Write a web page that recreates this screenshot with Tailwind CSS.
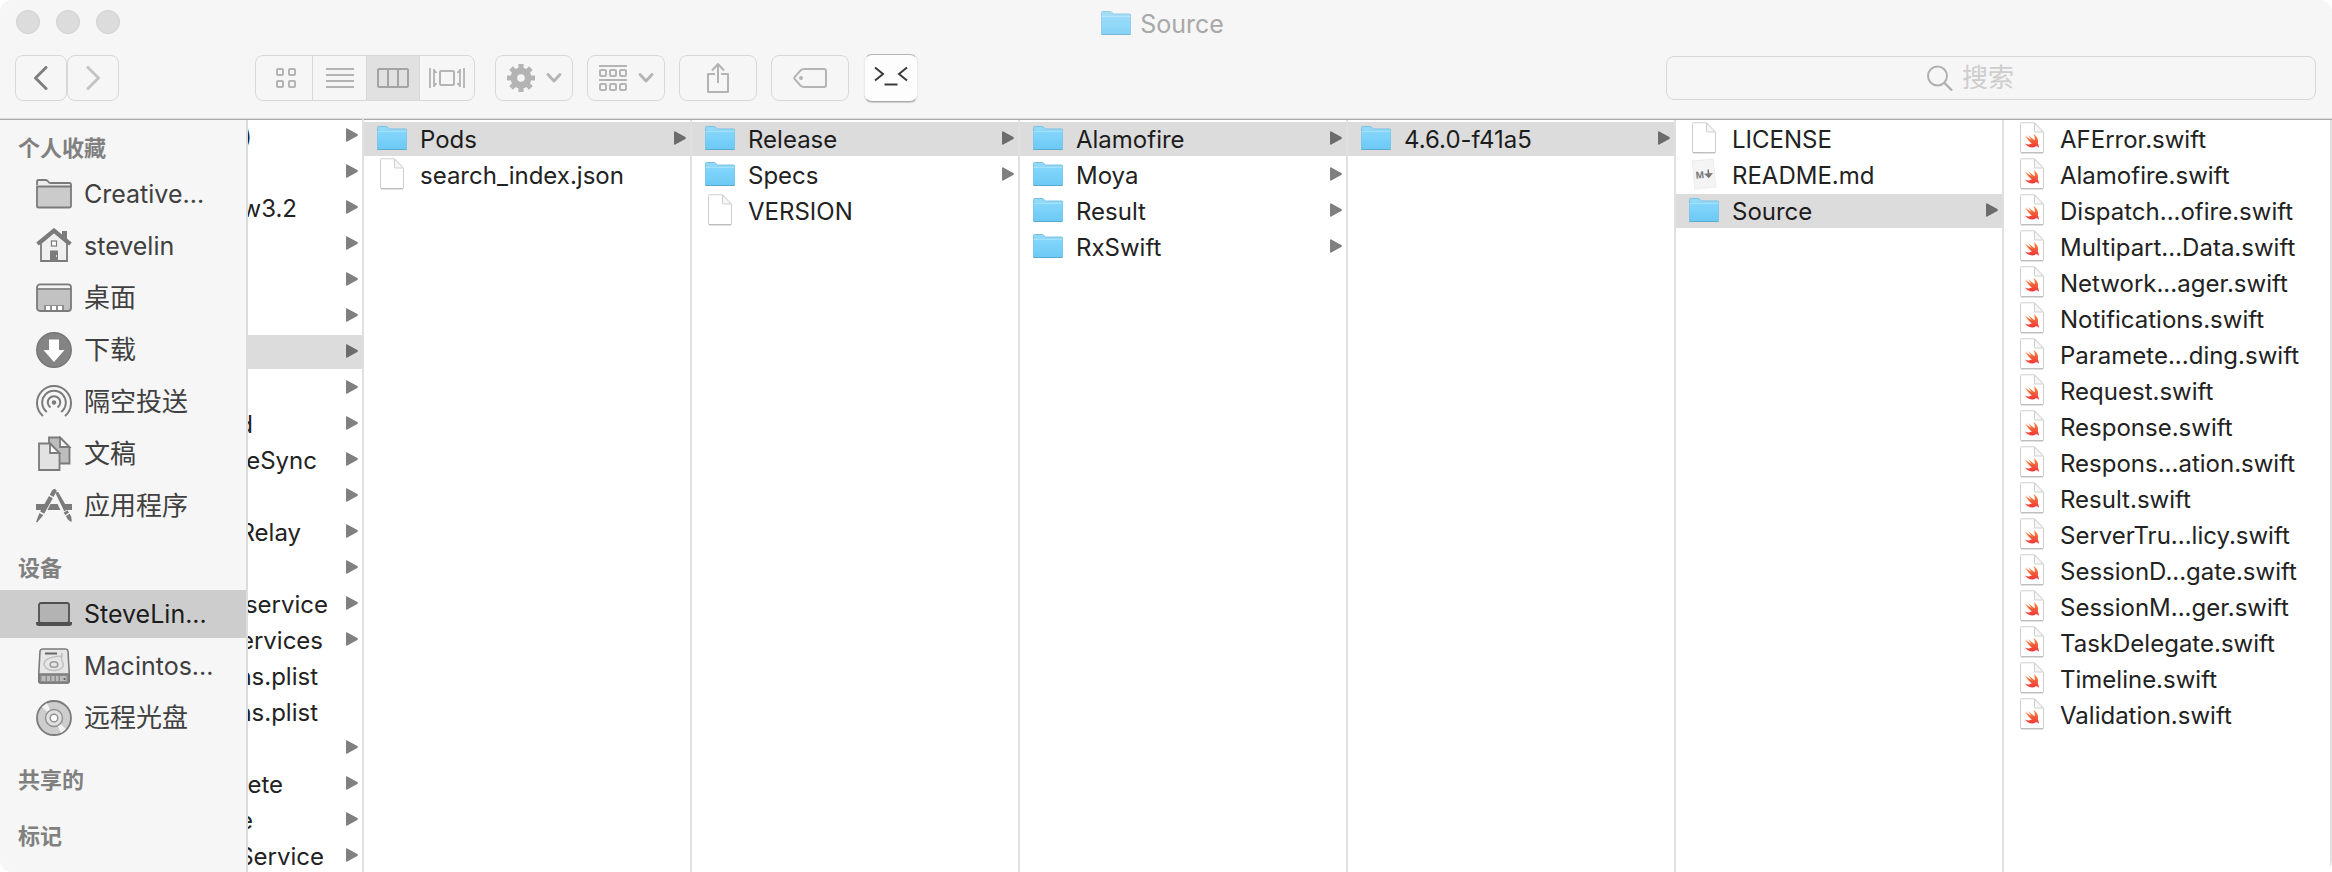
<!DOCTYPE html>
<html lang="zh-CN">
<head>
<meta charset="utf-8">
<title>Source</title>
<script src="https://cdn.jsdelivr.net/npm/@tailwindcss/browser@4"></script>
</head>
<body class="bg-white">
<svg class="absolute size-0" aria-hidden="true">
  <defs>
    <linearGradient id="blue" x1="0" y1="0" x2="0" y2="1"><stop offset="0" stop-color="#84d6fb"/><stop offset="1" stop-color="#6bc9f5"/></linearGradient>
    <linearGradient id="flame" x1="0" y1="0" x2="0" y2="1"><stop offset="0" stop-color="#f88a36"/><stop offset="1" stop-color="#f2333c"/></linearGradient>
    <symbol id="i-folder" viewBox="0 0 32 32">
      <path d="M1.5 27V5.5q0-1 1-1h7.500q.8 0 1.400.6l1.600 1.400q.5.500 1.300.500h15.200q1 0 1 1V27z" fill="#92d8f8" stroke="#7cc0e0"/>
      <path d="M1.500 9.500h29V27q0 .8-.8.8H2.300q-.8 0-.8-.8z" fill="url(#blue)"/>
      <path d="M1.500 9.500h29" stroke="#a4e1fc"/>
      <path d="M1.500 27.500h29" stroke="#5ba9cf"/>
    </symbol>
    <symbol id="i-doc" viewBox="0 0 32 32">
      <path d="M5.200.8h13.300l9 9.500V30q0 .7-.7.7H5.200q-.7 0-.7-.7V1.500q0-.7.7-.7z" fill="#fff" stroke="#cfcfcf"/>
      <path d="M18.500 1v8.200q0 .8.800.8h8z" fill="#f7f7f7" stroke="#d0d0d0"/>
      <path d="M5 30.800h22" stroke="#b4b4b4"/>
    </symbol>
    <symbol id="i-swift" viewBox="0 0 32 32">
      <use href="#i-doc"/>
      <path d="M8.800 21.500C12 26 17.500 26 19.600 24.500c1.400-.6 2.200.1 3.100 1.300.4-1.900-.2-3.400-.9-4.400C23 17 20.500 14 17.500 12c1.400 2.500 1.600 4.400 1.100 6.200C16 16.500 13.500 14.500 12 12.800c1 2 2.300 3.600 3.500 5C13.500 17 11 15.500 9 13.600c1.800 3.200 4.500 6.200 6.800 8-2 1.200-4.700.9-7-.1z" fill="url(#flame)"/>
    </symbol>
    <symbol id="i-md" viewBox="0 0 32 32">
      <g transform="rotate(-5 16 16)">
        <rect x="5.500" y="2" width="21" height="28" fill="#f4f4f4" stroke="#ececec"/>
        <text x="7.500" y="20" font-family="Liberation Sans" font-weight="700" font-size="10" fill="#777">M</text>
        <path d="M20.500 12v6M17.800 16.500l2.700 3 2.700-3z" stroke="#777" stroke-width="1.600" fill="#777"/>
      </g>
    </symbol>
    <symbol id="i-arrow" viewBox="0 0 12 14"><path d="M0 1.200Q0-.2 1.300.5l10 5.600q1.200.9 0 1.800l-10 5.600Q0 14.200 0 12.800z" fill="currentColor"/></symbol>
  </defs>
</svg>

<div class="flex h-screen flex-col overflow-hidden rounded-xl bg-[#f6f6f6] font-['Inter','Noto_Sans_CJK_SC',sans-serif] text-2xl leading-8 text-[#222]">
  <header class="h-[120px] shrink-0 border-b border-[#aaa] shadow-[inset_0_-1px_0_#dedede]">
    <div class="relative flex h-11 items-center gap-4 pl-4">
      <button aria-label="关闭" class="size-6 rounded-full border border-[#cfcfcf] bg-[#dcdcdc]"></button>
      <button aria-label="最小化" class="size-6 rounded-full border border-[#cfcfcf] bg-[#dcdcdc]"></button>
      <button aria-label="缩放" class="size-6 rounded-full border border-[#cfcfcf] bg-[#dcdcdc]"></button>
      <h1 class="absolute inset-x-0 top-[7px] mr-2 flex items-center justify-center gap-2 text-[25px] text-[#a8a8a8]">
        <svg class="mb-[2px] h-8 w-8 opacity-80"><use href="#i-folder"/></svg>Source
      </h1>
    </div>
    <div class="flex items-center pt-[10px] pr-4 pl-[15px]">
      <div class="flex">
        <button aria-label="后退" class="flex h-[46px] w-[52px] items-center justify-center rounded-lg border border-[#d8d8d8]">
          <svg class="h-6 w-4" viewBox="0 0 16 24" fill="none" stroke="#7f7f7f" stroke-width="3" stroke-linecap="round" stroke-linejoin="round"><path d="M13 1.500 2.500 12 13 22.500"/></svg>
        </button>
        <button aria-label="前进" class="flex h-[46px] w-[52px] items-center justify-center rounded-lg border border-[#d8d8d8]">
          <svg class="h-6 w-4" viewBox="0 0 16 24" fill="none" stroke="#c4c4c4" stroke-width="3" stroke-linecap="round" stroke-linejoin="round"><path d="M3 1.500 13.500 12 3 22.500"/></svg>
        </button>
      </div>
      <div class="ml-[136px] flex h-[46px] w-[220px] overflow-hidden rounded-lg border border-[#d8d8d8]">
        <button aria-label="图标" class="flex flex-1 items-center justify-center pl-1">
          <svg class="size-5" viewBox="0 0 20 20" fill="none" stroke="#b4b4b4" stroke-width="2"><rect x="1" y="1" width="6" height="6" rx="1"/><rect x="13" y="1" width="6" height="6" rx="1"/><rect x="1" y="13" width="6" height="6" rx="1"/><rect x="13" y="13" width="6" height="6" rx="1"/></svg>
        </button>
        <button aria-label="列表" class="flex w-[54px] items-center justify-center border-l border-[#d8d8d8]">
          <svg class="h-5 w-7" viewBox="0 0 28 20" stroke="#b4b4b4" stroke-width="2"><path d="M0 1h28M0 7h28M0 13h28M0 19h28"/></svg>
        </button>
        <button aria-label="分栏" class="flex w-[53px] items-center justify-center border-l border-[#d8d8d8] bg-[#e1e1e1]">
          <svg class="h-5 w-8" viewBox="0 0 32 20" fill="none" stroke="#a3a3a3" stroke-width="2"><rect x="1" y="1" width="30" height="18" rx="1"/><path d="M11 1v18M21 1v18"/></svg>
        </button>
        <button aria-label="封面" class="flex w-[55px] items-center justify-center border-l border-[#d8d8d8]">
          <svg class="h-5 w-9" viewBox="0 0 36 20" fill="none" stroke="#b4b4b4" stroke-width="2"><rect x="11" y="3" width="14" height="14" rx="1"/><path d="M1 0v20M35 0v20" stroke-width="1.800"/><path d="M5 1v18M31 1v18" stroke-width="1.800"/><path d="M5 1l3 3v1H5zM5 19l3-3v-1H5zM31 1l-3 3v1h3zM31 19l-3-3v-1h3z" fill="#b4b4b4" stroke="none"/></svg>
        </button>
      </div>
      <div class="ml-5 flex gap-[14px]">
        <button aria-label="操作" class="flex h-[46px] w-[78px] items-center justify-center gap-[11px] rounded-lg border border-[#d8d8d8]">
          <svg class="size-7" viewBox="-14 -14 28 28" fill="#b4b4b4"><path fill-rule="evenodd" d="M0-10.500a10.500 10.500 0 1 0 0 21 10.500 10.500 0 1 0 0-21zM0-3.800a3.800 3.800 0 1 1 0 7.600 3.800 3.800 0 1 1 0-7.600z"/><g id="teeth"><path d="M-2.600-14h5.200v5h-5.200zM-2.600 9h5.200v5h-5.200zM-14-2.600h5v5.200h-5zM9-2.600h5v5.200H9z"/></g><use href="#teeth" transform="rotate(45)"/></svg>
          <svg class="h-[10px] w-4" viewBox="0 0 16 10" fill="none" stroke="#b4b4b4" stroke-width="2.800" stroke-linecap="round" stroke-linejoin="round"><path d="M2 1.500 8 8l6-6.500"/></svg>
        </button>
        <button aria-label="排列" class="flex h-[46px] w-[78px] items-center justify-center gap-[11px] rounded-lg border border-[#d8d8d8]">
          <svg class="h-[26px] w-7" viewBox="0 0 28 26" fill="none" stroke="#b4b4b4" stroke-width="2"><path d="M0 1h28M0 15h28"/><rect x="1" y="5" width="6" height="6" rx="1"/><rect x="11" y="5" width="6" height="6" rx="1"/><rect x="21" y="5" width="6" height="6" rx="1"/><rect x="1" y="19" width="6" height="6" rx="1"/><rect x="11" y="19" width="6" height="6" rx="1"/><rect x="21" y="19" width="6" height="6" rx="1"/></svg>
          <svg class="h-[10px] w-4" viewBox="0 0 16 10" fill="none" stroke="#b4b4b4" stroke-width="2.800" stroke-linecap="round" stroke-linejoin="round"><path d="M2 1.500 8 8l6-6.500"/></svg>
        </button>
        <button aria-label="共享" class="flex h-[46px] w-[78px] items-center justify-center rounded-lg border border-[#d8d8d8]">
          <svg class="h-8 w-[22px]" viewBox="0 0 22 32" fill="none" stroke="#b4b4b4" stroke-width="2" stroke-linejoin="round"><path d="M8 12H1v18h20V12h-7M11 21V2M5 8.500l6-6.500 6 6.500"/></svg>
        </button>
        <button aria-label="标记" class="flex h-[46px] w-[78px] items-center justify-center rounded-lg border border-[#d8d8d8]">
          <svg class="h-5 w-[34px]" viewBox="0 0 34 20" fill="none" stroke="#b4b4b4" stroke-width="2"><path d="M11 1h20q2 0 2 2v14q0 2-2 2H11q-2 0-3.500-1.500L1.800 11.200q-1-1.200 0-2.400L7.500 2.500Q9 1 11 1z"/><circle cx="8" cy="10" r="2" fill="#b4b4b4" stroke="none"/></svg>
        </button>
      </div>
      <button aria-label="终端" class="ml-[15px] flex h-12 w-[54px] items-center justify-center rounded-lg border border-x-[#ececec] border-t-[#b5b5b5] border-b-[#a8a8a8] bg-[#fdfdfd] pb-1 shadow-[0_1px_1px_#d0d0d0]">
        <svg class="h-5 w-[34px]" viewBox="0 0 34 20" fill="none" stroke="#3a3a3a" stroke-width="2"><path d="M1 1.500 9 8l-8 6.500M33 1.500 25 8l8 6.500M10.500 18.500h13"/></svg>
      </button>
      <label class="ml-auto flex h-11 w-[650px] items-center justify-center gap-2 rounded-lg border border-[#d8d8d8]">
        <svg class="h-7 w-7" viewBox="0 0 28 28" fill="none" stroke="#b0b0b0" stroke-width="2"><circle cx="11.500" cy="12" r="9.500"/><path d="m18.500 19 7.500 7.500" stroke-width="2.400"/></svg>
        <input type="text" aria-label="搜索" placeholder="搜索" class="w-[94px] bg-transparent text-[26px] outline-none placeholder:text-[#cdcdcd]">
      </label>
    </div>
  </header>

  <main class="flex min-h-0 flex-1">
    <nav class="flex w-[248px] shrink-0 flex-col gap-4 border-r-2 border-[#dcdcdc] pt-2 text-[25px] text-[#404040]">
      <section>
        <h2 class="h-10 pl-[18px] text-[22px] leading-10 font-bold text-[#808080]">个人收藏</h2>
        <ul>
          <li class="py-[2px]"><a href="#" class="flex h-12 items-center gap-3 pl-9"><svg class="size-9" viewBox="0 0 36 36" fill="none" stroke="#7b7b7b" stroke-width="1.800"><path d="M1 9V5.500Q1 4 2.500 4h7q1.300 0 2.200 1l1 1.200q.6.800 1.800.8h19Q35 7 35 8.500V11" fill="#ececec"/><path d="M1 10.500h34V30q0 1.500-1.500 1.500h-31Q1 31.500 1 30z" fill="#cbcbcb"/></svg><span>Creative...</span></a></li>
          <li class="py-[2px]"><a href="#" class="flex h-12 items-center gap-3 pl-9"><svg class="size-9" viewBox="0 0 36 36"><path d="M5 15 18 4l13 11v18H5z" fill="#f0f0f0" stroke="#7b7b7b" stroke-width="1.800"/><path d="M26 3h5v9l-5-4z" fill="#7b7b7b"/><path d="M1.500 16 18 2.500 34.500 16" fill="none" stroke="#7b7b7b" stroke-width="4"/><rect x="15.500" y="13" width="5" height="5" fill="#fff" stroke="#7b7b7b" stroke-width="1.200"/><path d="M14 22.500h8V33h-8z" fill="#7b7b7b"/><path d="M20.500 27v2" stroke="#ddd"/></svg><span>stevelin</span></a></li>
          <li class="py-[2px] text-[26px]"><a href="#" class="flex h-12 items-center gap-3 pl-9"><svg class="size-9" viewBox="0 0 36 36"><rect x="1" y="4.500" width="34" height="26.500" rx="3" fill="#c2c2c2" stroke="#7b7b7b" stroke-width="1.800"/><path d="M2 8V7q0-1.500 1.500-1.500h29Q34 5.500 34 7v1z" fill="#f4f4f4"/><path d="M1 9h34" stroke="#7b7b7b" stroke-width="1.600"/><path d="M8 30v-5h20v5z" fill="#8f8f8f"/><path d="M10 26h4v4h-4zM16 26h4v4h-4zM22 26h4v4h-4z" fill="#fff"/></svg><span>桌面</span></a></li>
          <li class="py-[2px] text-[26px]"><a href="#" class="flex h-12 items-center gap-3 pl-9"><svg class="size-9" viewBox="0 0 36 36"><circle cx="18" cy="18" r="17.200" fill="#848484" stroke="#777" stroke-width="1.500"/><path d="M13 7.500h10V18h5.500L18 30 7.500 18H13z" fill="#fff"/></svg><span>下载</span></a></li>
          <li class="py-[2px] text-[26px]"><a href="#" class="flex h-12 items-center gap-3 pl-9"><svg class="size-9" viewBox="0 0 36 36" fill="none" stroke="#7b7b7b" stroke-width="2"><circle cx="18" cy="18.500" r="2.200" fill="#7b7b7b" stroke="none"/><path d="M14.500 23.500A6.200 6.200 0 1 1 21.500 23.500M10.800 28A11.800 11.800 0 1 1 25.200 28M7 32A17 17 0 1 1 29 32"/></svg><span>隔空投送</span></a></li>
          <li class="py-[2px] text-[26px]"><a href="#" class="flex h-12 items-center gap-3 pl-9"><svg class="size-9" viewBox="0 0 36 36" stroke="#7b7b7b" stroke-width="1.800"><path d="M13 1.500h11l9.500 9.500v16.500H13z" fill="#bdbdbd"/><path d="M24 1.500V11h9.500z" fill="#f6f6f6"/><path d="M3 7.500h11l9.500 9.500v17H3z" fill="#e2e2e2"/><path d="M14 7.500V17h9.500z" fill="#fff"/></svg><span>文稿</span></a></li>
          <li class="py-[2px] text-[26px]"><a href="#" class="flex h-12 items-center gap-3 pl-9"><svg class="size-9" viewBox="0 0 36 36" fill="#7b7b7b"><path d="M0 16h9l-3 6H0zM14.500 16h7l3 6h-13zM27 16h9v6h-6z"/><path d="M16.500 1.800 19 .8l1.800 2L17.500 9 13.700 6.800zM13 8l3.800 2.200-8.600 15.500-4-2.200zM3.500 25l3.800 2.200L1 34.500 0 33.800z"/><path d="m19.200 4.500 3-.5L32 21l-3.800 2.200zM27.700 24.500l3.800-2.200 1.500 2.500-3.800 2.200zM30 28l3.800-2.200q2.400 3.700 1.700 8.200Q31.500 32.500 30 28z"/></svg><span>应用程序</span></a></li>
        </ul>
      </section>
      <section>
        <h2 class="h-10 pl-[18px] text-[22px] leading-10 font-bold text-[#808080]">设备</h2>
        <ul>
          <li class="py-[2px]"><a href="#" aria-current="true" class="flex h-12 items-center gap-3 bg-[#cdcdcd] pl-9 text-[#1c1c1c]"><svg class="size-9" viewBox="0 0 36 36"><rect x="3" y="7" width="30" height="20" rx="2" fill="#b3b3b3" stroke="#505050" stroke-width="1.800"/><path d="M0 26h36v1.500Q36 30 33 30H3q-3 0-3-2.500z" fill="#505050"/></svg><span>SteveLin...</span></a></li>
          <li class="py-[2px]"><a href="#" class="flex h-12 items-center gap-3 pl-9"><svg class="size-9" viewBox="0 0 36 36" fill="none" stroke="#7b7b7b" stroke-width="1.600"><path d="M6.500 1h23Q31.500 1 32 3l1.200 22v8q0 2-2 2H4.800q-2 0-2-2v-8L4 3q.5-2 2.500-2z" fill="#e6e6e6"/><path d="M3 26h30v7q0 2-2 2H5q-2 0-2-2z" fill="#8c8c8c"/><path d="M5.500 28h4v5h-4zM11 28h3v5h-3zM15.500 28h3v5h-3zM20 28h2.500v5H20zM24 28h6.500v5H24z" fill="#bdbdbd" stroke="none"/><circle cx="28.500" cy="31" r="1.100" fill="#555" stroke="none"/><path d="M9 5.500h12" stroke="#666" stroke-width="2"/><path d="M26 8Q14 8.500 9.500 12.500C6 17 10 22.500 18 22.500c7 0 10-3.500 9-7.500-1-2-2.500-3-1-10z" stroke="#c0c0c0" stroke-width="1.500"/><ellipse cx="18" cy="16.500" rx="3.800" ry="2.800" stroke="#999"/></svg><span>Macintos...</span></a></li>
          <li class="py-[2px] text-[26px]"><a href="#" class="flex h-12 items-center gap-3 pl-9"><svg class="size-9" viewBox="0 0 36 36"><circle cx="18" cy="18" r="17" fill="#cdcdcd" stroke="#7b7b7b" stroke-width="1.800"/><path d="M18 18 6 7l5-4zM18 18l12 11-5 4z" fill="#f2f2f2"/><circle cx="18" cy="18" r="8.500" fill="#e0e0e0" stroke="#909090" stroke-width="1.400"/><circle cx="18" cy="18" r="3.800" fill="#fff" stroke="#909090" stroke-width="1.400"/></svg><span>远程光盘</span></a></li>
        </ul>
      </section>
      <h2 class="h-10 pl-[18px] text-[22px] leading-10 font-bold text-[#808080]">共享的</h2>
      <h2 class="h-10 pl-[18px] text-[22px] leading-10 font-bold text-[#808080]">标记</h2>
    </nav>
    <div id="browser" class="flex min-w-0 flex-1 bg-white"></div>
  </main>
</div>

<script>
const arrow = '<svg class="ml-auto mb-1 h-[14px] w-3 shrink-0"><use href="#i-arrow"/></svg>';

// Parent column, scrolled sideways: [visible tail of the name, visible width, has arrow, selected]
const parent = [
  [')', 4, 1], ['', 0, 1], ['w3.2', 49, 1], ['', 0, 1], ['', 0, 1], ['', 0, 1], ['', 0, 1, 1], ['', 0, 1],
  ['d', 5, 1], ['eSync', 69, 1], ['', 0, 1], ['Relay', 53, 1], ['', 0, 1], ['service', 80, 1],
  ['ervices', 75, 1], ['ns.plist', 70, 0], ['ns.plist', 70, 0], ['', 0, 1], ['ete', 35, 1], ['e', 5, 1], ['Service', 76, 1]
];
const columns = [
  [['folder', 'Pods', 1, 1], ['doc', 'search_index.json']],
  [['folder', 'Release', 1, 1], ['folder', 'Specs', 1], ['doc', 'VERSION']],
  [['folder', 'Alamofire', 1, 1], ['folder', 'Moya', 1], ['folder', 'Result', 1], ['folder', 'RxSwift', 1]],
  [['folder', '4.6.0-f41a5', 1, 1]],
  [['doc', 'LICENSE'], ['md', 'README.md'], ['folder', 'Source', 1, 1]],
  ['AFError', 'Alamofire', 'Dispatch...ofire', 'Multipart...Data', 'Network...ager', 'Notifications', 'Paramete...ding',
   'Request', 'Response', 'Respons...ation', 'Result', 'ServerTru...licy', 'SessionD...gate', 'SessionM...ger',
   'TaskDelegate', 'Timeline', 'Validation'].map(n => ['swift', n + '.swift'])
];
const tone = on => on ? 'bg-[#dcdcdc] text-[#1c1c1c] [&>svg:last-child]:text-[#6c6c6c]' : '[&>svg:last-child]:text-[#808080]';

const first = `<ul class="-mt-px w-[116px] shrink-0 overflow-hidden border-r-2 border-[#e0e0e0]">` +
  parent.map(([name, width, more, on]) =>
    `<li class="pb-[2px]"><a href="#" class="flex h-[34px] items-center pt-[2px] pr-1 ${tone(on)}"><span class="flex justify-end overflow-hidden whitespace-nowrap" style="width:${width}px"><span>${name}</span></span>${more ? arrow : ''}</a></li>`).join('') + '</ul>';

const rest = columns.map(items =>
  `<ul class="min-w-0 flex-1 border-r-2 border-[#e0e0e0] pt-[2px]">` +
  items.map(([icon, name, more, on]) =>
    `<li class="pb-[2px]"><a href="#" class="flex h-[34px] items-center pt-[2px] pr-1 pl-3 ${tone(on)}"><svg class="mr-3 mb-1 size-8 shrink-0"><use href="#i-${icon}"/></svg><span class="whitespace-nowrap">${name}</span>${more ? arrow : ''}</a></li>`).join('') + '</ul>').join('');

document.getElementById('browser').innerHTML = first + rest;
</script>
</body>
</html>
